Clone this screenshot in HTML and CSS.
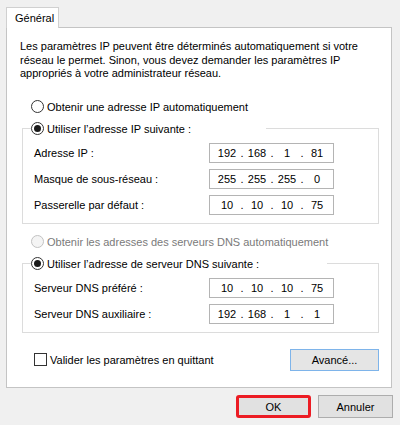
FILE: index.html
```html
<!DOCTYPE html>
<html lang="fr">
<head>
<meta charset="utf-8">
<title>Propriétés de : Protocole Internet version 4 (TCP/IPv4)</title>
<link rel="stylesheet" href="styles.css">
</head>
<body>
<div class="dialog">
  <div class="tabs"><div class="tab">Général</div></div>
  <div class="panel">
    <p class="intro">Les paramètres IP peuvent être déterminés automatiquement si votre réseau le permet. Sinon, vous devez demander les paramètres IP appropriés à votre administrateur réseau.</p>

    <div class="radio-row first"><span class="radio"></span><span>Obtenir une adresse IP automatiquement</span></div>

    <fieldset class="group">
      <legend class="legend ip-legend"><span class="radio checked"></span><span>Utiliser l’adresse IP suivante :</span></legend>
      <div class="rows">
        <span class="label">Adresse IP :</span>
        <div class="ip"><span class="f">192</span><span class="d">.</span><span class="f">168</span><span class="d">.</span><span class="f">1</span><span class="d">.</span><span class="f">81</span></div>
        <span class="label">Masque de sous-réseau :</span>
        <div class="ip"><span class="f">255</span><span class="d">.</span><span class="f">255</span><span class="d">.</span><span class="f">255</span><span class="d">.</span><span class="f">0</span></div>
        <span class="label">Passerelle par défaut :</span>
        <div class="ip"><span class="f">10</span><span class="d">.</span><span class="f">10</span><span class="d">.</span><span class="f">10</span><span class="d">.</span><span class="f">75</span></div>
      </div>
    </fieldset>

    <div class="radio-row disabled"><span class="radio"></span><span>Obtenir les adresses des serveurs DNS automatiquement</span></div>

    <fieldset class="group dns">
      <legend class="legend dns-legend"><span class="radio checked"></span><span>Utiliser l’adresse de serveur DNS suivante :</span></legend>
      <div class="rows">
        <span class="label">Serveur DNS préféré :</span>
        <div class="ip"><span class="f">10</span><span class="d">.</span><span class="f">10</span><span class="d">.</span><span class="f">10</span><span class="d">.</span><span class="f">75</span></div>
        <span class="label">Serveur DNS auxiliaire :</span>
        <div class="ip"><span class="f">192</span><span class="d">.</span><span class="f">168</span><span class="d">.</span><span class="f">1</span><span class="d">.</span><span class="f">1</span></div>
      </div>
    </fieldset>

    <div class="bottom-row">
      <div class="check-row"><span class="checkbox"></span><span>Valider les paramètres en quittant</span></div>
      <div class="btn advanced">Avancé...</div>
    </div>
  </div>
  <div class="actions">
    <div class="btn ok">OK</div>
    <div class="btn">Annuler</div>
  </div>
</div>
</body>
</html>
```
FILE: styles.css
```css
html, body {
  margin: 0;
  padding: 0;
  background: #f0f0f0;
}
body {
  font-family: "Liberation Sans", Arial, sans-serif;
  font-size: 11px;
  color: #000;
  width: 400px;
  height: 425px;
  overflow: hidden;
}
.dialog {
  padding: 7px 0 0 6px;
}
.tabs {
  display: flex;
}
.tab {
  position: relative;
  z-index: 1;
  box-sizing: border-box;
  width: 53px;
  height: 21px;
  margin-bottom: -1px;
  border: 1px solid #d0d0d0;
  border-bottom: none;
  background: #fff;
  padding: 3px 0 0 8px;
  line-height: 14px;
}
.panel {
  box-sizing: border-box;
  width: 386px;
  height: 361px;
  border: 1px solid #c4c4c4;
  background: #fff;
  padding: 12px 12px 0 13px;
}
.intro {
  margin: 0;
  line-height: 13.5px;
}
.radio-row {
  display: flex;
  align-items: center;
  height: 16px;
  margin-left: 11px;
}
.radio-row.first {
  margin-top: 18px;
}
.radio {
  box-sizing: border-box;
  width: 13px;
  height: 13px;
  border: 1px solid #333;
  border-radius: 50%;
  background: #fff;
  margin-right: 3px;
  display: flex;
  align-items: center;
  justify-content: center;
  flex: none;
}
.radio.checked::after {
  content: "";
  width: 7px;
  height: 7px;
  border-radius: 50%;
  background: #1a1a1a;
}
.disabled {
  color: #7a7a7a;
  margin-top: 10px;
}
.disabled .radio {
  border-color: #c2c2c2;
  background: #f4f4f4;
}
.group {
  margin: 6px 0 0 2px;
  padding: 0 0 8px 11px;
  border: 1px solid #dcdcdc;
  min-width: 0;
}
.legend {
  box-sizing: border-box;
  display: flex;
  align-items: center;
  height: 16px;
  padding: 0;
  margin-left: -3px;
  background: #fff;
}
.ip-legend {
  width: 235px;
}
.dns-legend {
  width: 296px;
}
.rows {
  display: grid;
  grid-template-columns: 175px 125px;
  grid-auto-rows: 20px;
  row-gap: 6px;
  align-items: center;
  padding-top: 6px;
}
.ip {
  box-sizing: border-box;
  height: 20px;
  border: 1px solid #b4b4b4;
  display: flex;
  align-items: center;
  padding-left: 5px;
}
.f {
  width: 24px;
  text-align: center;
}
.d {
  width: 6px;
  text-align: center;
}
.bottom-row {
  display: flex;
  justify-content: space-between;
  align-items: center;
  margin-top: 16px;
  margin-left: 14px;
}
.check-row {
  display: flex;
  align-items: center;
}
.checkbox {
  box-sizing: border-box;
  width: 13px;
  height: 13px;
  border: 1px solid #333;
  background: #fff;
  margin-right: 3px;
}
.btn {
  box-sizing: border-box;
  width: 75px;
  height: 23px;
  border: 1px solid #adadad;
  background: #e1e1e1;
  display: flex;
  align-items: center;
  justify-content: center;
}
.advanced {
  width: 89px;
  height: 22px;
  border-color: #7eb4ea;
  background: #e5e5e5;
}
.actions {
  display: flex;
  justify-content: flex-end;
  gap: 7px;
  width: 387px;
  margin-top: 7px;
}
.ok {
  border: 3px solid #ec1c24;
  border-radius: 3px;
}
```
